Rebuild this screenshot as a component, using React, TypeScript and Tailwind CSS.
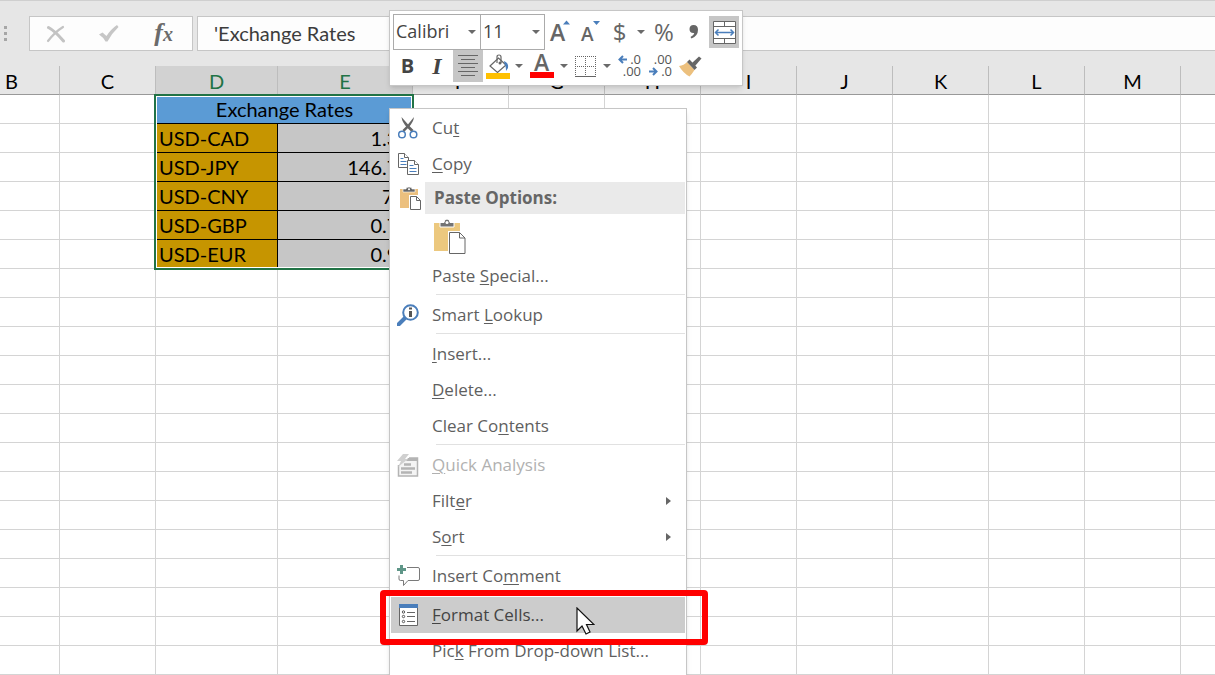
import { Fragment, type ReactNode } from 'react';
import clsx from 'clsx';

const COLUMNS = ['B', 'C', 'D', 'E', 'F', 'G', 'H', 'I', 'J', 'K', 'L', 'M', 'N'];

const RATES = [
  { pair: 'USD-CAD', rate: '1.35' },
  { pair: 'USD-JPY', rate: '146.77' },
  { pair: 'USD-CNY', rate: '7.1' },
  { pair: 'USD-GBP', rate: '0.74' },
  { pair: 'USD-EUR', rate: '0.92' },
];

const EMPTY_ROWS = 15;

const sheetFont = "font-['Lato',sans-serif]";
const uiFont = "font-['Open_Sans',sans-serif]";
const cellClass = 'h-[29px] border-r border-b border-[#d4d4d4] p-0';

function FormulaBar() {
  return (
    <div className="flex items-stretch gap-1 border-t border-[#cfcfcf] py-[15px]">
      <div className="flex w-6 items-center justify-start pl-1">
        <svg width="3" height="16" viewBox="0 0 3 16" fill="#a6a6a6">
          <path d="M0 0h3v3H0zM0 6h3v3H0zM0 12h3v3H0z" />
        </svg>
      </div>
      <div className="ml-px flex h-[35px] w-[164px] items-center justify-around border border-[#c6c6c6] bg-[#fdfdfd]">
        <button type="button" aria-label="Cancel">
          <svg width="20" height="18" viewBox="0 0 20 18" fill="none" stroke="#c3c3c3" strokeLinecap="round">
            <path d="M2.500 2.500Q9 6 17.500 16" strokeWidth="3" />
            <path d="M17 2Q9 7 2 16" strokeWidth="2.200" />
          </svg>
        </button>
        <button type="button" aria-label="Enter">
          <svg width="20" height="17" viewBox="0 0 20 17" fill="#c6c6c6">
            <path d="M0 9.500L3.500 7.500L7.500 11Q12 4 18 0L19.500 2Q13 8 8.500 16.500H6.500Q4 12 0 9.500z" />
          </svg>
        </button>
        <button
          type="button"
          className="w-6 font-['Liberation_Serif',serif] text-[26px] leading-7 font-bold text-[#6b6b6b] italic"
        >
          f<span className="text-xl">x</span>
        </button>
      </div>
      <input
        aria-label="Formula"
        defaultValue="'Exchange Rates"
        className={clsx(
          sheetFont,
          'h-[35px] min-w-0 flex-1 border border-r-0 border-[#c6c6c6] bg-[#fdfdfd] px-4 pb-0.5 text-xl text-[#3c3c3c] outline-none',
        )}
      />
    </div>
  );
}

function Sheet() {
  return (
    <table className={clsx(sheetFont, '-ml-9 w-[1313px] table-fixed border-separate border-spacing-0 text-xl leading-5 text-black')}>
      <colgroup>
        {COLUMNS.map((name) => (
          <col key={name} className={name === 'D' ? 'w-[122px]' : name === 'E' ? 'w-[135px]' : 'w-24'} />
        ))}
      </colgroup>
      <thead>
        <tr>
          {COLUMNS.map((name) => (
            <th
              key={name}
              className={clsx(
                'h-[29px] border-r border-b border-r-[#bdbdbd] border-b-[#999] p-0 pt-0.5 text-center font-normal',
                name === 'D' || name === 'E' ? 'bg-[#d2d2d2] text-[#217346]' : 'bg-[#e6e6e6]',
              )}
            >
              {name}
            </th>
          ))}
        </tr>
      </thead>
      <tbody>
        <tr>
          <td className={cellClass} />
          <td className={cellClass} />
          <td colSpan={2} className="relative h-[29px] border-b border-black bg-[#5b9bd5] p-0 text-center">
            Exchange Rates
            <div className="pointer-events-none absolute -top-px -left-0.5 h-44 w-[260px] border-2 border-[#217346] shadow-[inset_0_0_0_1px_#fff]" />
          </td>
          {COLUMNS.slice(4).map((name) => (
            <td key={name} className={cellClass} />
          ))}
        </tr>
        {RATES.map(({ pair, rate }) => (
          <tr key={pair}>
            <td className={cellClass} />
            <td className={cellClass} />
            <td className="h-[29px] border-r border-b border-black bg-[#c69500] p-0 pl-[3px]">{pair}</td>
            <td className="h-[29px] border-b border-black bg-[#c6c6c6] p-0 pr-[3px] text-right">{rate}</td>
            {COLUMNS.slice(4).map((name) => (
              <td key={name} className={cellClass} />
            ))}
          </tr>
        ))}
        {Array.from({ length: EMPTY_ROWS }, (_, row) => (
          <tr key={row}>
            {COLUMNS.map((name) => (
              <td key={name} className={cellClass} />
            ))}
          </tr>
        ))}
      </tbody>
    </table>
  );
}

function Caret() {
  return (
    <svg width="8" height="4" viewBox="0 0 8 4" fill="#6a6a6a">
      <path d="M0 0h8L4 4z" />
    </svg>
  );
}

function ToolButton({ label, className, children }: { label: string; className: string; children: ReactNode }) {
  return (
    <button type="button" aria-label={label} className={clsx('flex h-8 items-center justify-center', className)}>
      {children}
    </button>
  );
}

function ToolSelect({ label, value, className }: { label: string; value: string; className: string }) {
  return (
    <div className={clsx('relative h-9', className)}>
      <select
        aria-label={label}
        defaultValue={value}
        className="h-full w-full appearance-none border border-[#ababab] bg-white pb-0.5 pl-0.5 text-lg text-[#444] outline-none"
      >
        <option>{value}</option>
      </select>
      <span className="pointer-events-none absolute inset-y-0 right-[5px] flex items-center">
        <Caret />
      </span>
    </div>
  );
}

function MiniToolbar() {
  return (
    <div
      className={clsx(
        uiFont,
        'absolute top-[10px] left-[389px] flex h-[76px] w-[354px] flex-col border border-[#c6c6c6] bg-white pt-[3px] pl-[3px] text-[#666] shadow-md',
      )}
    >
      <div className="flex h-9 items-center">
        <ToolSelect label="Font" value="Calibri" className="w-[88px]" />
        <ToolSelect label="Font size" value="11" className="-ml-px w-[65px]" />
        <ToolButton label="Increase font size" className="w-[30px]">
          <svg className="overflow-visible" width="20" height="24" viewBox="0 0 20 24">
            <path d="M13 4.500L16.500 .5L20 4.500z" fill="#4a7ebb" />
            <text x="0" y="21" fontSize="23" fontWeight="600" fill="#666">A</text>
          </svg>
        </ToolButton>
        <ToolButton label="Decrease font size" className="w-[30px]">
          <svg className="overflow-visible" width="20" height="24" viewBox="0 0 20 24">
            <path d="M13 1h7l-3.500 4z" fill="#4a7ebb" />
            <text x="1" y="21" fontSize="19" fontWeight="600" fill="#666">A</text>
          </svg>
        </ToolButton>
        <ToolButton label="Accounting format" className="w-[29px] text-2xl">
          $
        </ToolButton>
        <ToolButton label="Accounting options" className="w-[14px]">
          <Caret />
        </ToolButton>
        <ToolButton label="Percent style" className="w-8 text-2xl">
          %
        </ToolButton>
        <ToolButton label="Comma style" className="w-7">
          <svg width="10" height="14" viewBox="0 0 10 14" fill="#666">
            <path d="M4.500 0Q9 0 9 4.800Q9 11 2.500 13.500L1.500 12Q5 10.500 5.300 8Q0.500 8.500 0.500 4Q0.700 0 4.500 0z" />
          </svg>
        </ToolButton>
        <ToolButton label="Merge and center" className="ml-px w-[30px] bg-[#c6c6c6]">
          <svg width="23" height="23" viewBox="0 0 23 23" fill="none">
            <path d="M0.500 0.500h22v22h-22zM0.500 5.500h22M0.500 17.500h22M11.500 0.500v5M11.500 17.500v5" fill="#fff" stroke="#666" />
            <path d="M2 11.500h19M5.500 8.500L2.500 11.500L5.500 14.500M17.500 8.500L20.500 11.500L17.500 14.500" stroke="#4a7ebb" strokeWidth="1.500" />
          </svg>
        </ToolButton>
      </div>
      <div className="flex h-8 items-center">
        <ToolButton label="Bold" className="w-[29px] text-xl font-bold text-[#444]">
          B
        </ToolButton>
        <ToolButton
          label="Italic"
          className="mr-px w-[30px] font-['Liberation_Serif',serif] text-2xl font-bold text-[#444] italic"
        >
          I
        </ToolButton>
        <ToolButton label="Center" className="w-[30px] bg-[#c6c6c6]">
          <svg width="20" height="22" viewBox="0 0 20 22" stroke="#666">
            <path d="M0 .5h20M3 4.500h14M0 8.500h20M3 12.500h14M0 16.500h20M3 20.500h14" />
          </svg>
        </ToolButton>
        <ToolButton label="Fill color" className="w-[29px]">
          <svg width="24" height="25" viewBox="0 0 24 25" fill="none">
            <path d="M4 12L12.500 4L20 11L11.500 18.500z" fill="#fff" stroke="#666" strokeWidth="1.200" />
            <path d="M11 9V3Q11 1 13 1t2 2v6" stroke="#666" strokeWidth="1.200" />
            <circle cx="14" cy="9" r="1.500" fill="#666" />
            <path d="M18 7Q23 9 22 14L20 17Q20 12 18.500 10z" fill="#4a7ebb" />
            <path d="M0 19h24v6H0z" fill="#ffc000" />
          </svg>
        </ToolButton>
        <ToolButton label="Fill color options" className="w-[14px]">
          <Caret />
        </ToolButton>
        <ToolButton label="Font color" className="w-[31px]">
          <svg className="overflow-visible" width="24" height="24" viewBox="0 0 24 24">
            <text x="4" y="17" fontSize="23" fontWeight="600" fill="#666">A</text>
            <path d="M0 18h24v6H0z" fill="#f00" />
          </svg>
        </ToolButton>
        <ToolButton label="Font color options" className="w-[13px]">
          <Caret />
        </ToolButton>
        <ToolButton label="Borders" className="w-[30px]">
          <svg width="21" height="21" viewBox="0 0 21 21" fill="none" stroke="#666">
            <path d="M0 .5h21M0 10.500h21M.5 0v20M10.500 0v20M20.500 0v20" strokeDasharray="1 1" />
            <path d="M0 20.500h21" />
          </svg>
        </ToolButton>
        <ToolButton label="Border options" className="w-[14px]">
          <Caret />
        </ToolButton>
        <ToolButton label="Increase decimal" className="w-[31px]">
          <svg className="overflow-visible" width="23" height="24" viewBox="0 0 23 24">
            <path d="M9 5.500H2M5 2L1.500 5.500L5 9" fill="none" stroke="#4a7ebb" strokeWidth="2" />
            <text x="23" y="10" fontSize="13" textAnchor="end" fill="#555">.0</text>
            <text x="23" y="22" fontSize="13" textAnchor="end" fill="#555">.00</text>
          </svg>
        </ToolButton>
        <ToolButton label="Decrease decimal" className="w-[31px]">
          <svg className="overflow-visible" width="23" height="24" viewBox="0 0 23 24">
            <text x="23" y="10" fontSize="13" textAnchor="end" fill="#555">.00</text>
            <path d="M0 17.500h7M4 14L7.500 17.500L4 21" fill="none" stroke="#4a7ebb" strokeWidth="2" />
            <text x="23" y="22" fontSize="13" textAnchor="end" fill="#555">.0</text>
          </svg>
        </ToolButton>
        <ToolButton label="Format painter" className="w-7">
          <svg width="23" height="21" viewBox="0 0 23 21">
            <path d="M0 10Q5 9.500 8 6L15.500 14Q13 18 10.500 20.500Q4 17 0 10z" fill="#ecc07e" />
            <path d="M8 6L10.500 3.500L18 11.500L15.500 14z" fill="#666" />
            <path d="M13 7L20 0.500L22.500 2.500L16 10z" fill="#666" />
          </svg>
        </ToolButton>
      </div>
    </div>
  );
}

const icons = {
  cut: (
    <svg width="20" height="22" viewBox="0 0 20 22" fill="none">
      <path d="M3.500 0Q4 5 9 10.500L13.500 15L15.500 13L10.500 8z" fill="#666" />
      <path d="M16 0Q15.500 5 10.500 10.500L6 15L4.500 13L9.500 8z" fill="#666" />
      <circle cx="4" cy="17.500" r="3.300" stroke="#4a7ebb" strokeWidth="1.500" />
      <circle cx="15.500" cy="17.500" r="3.300" stroke="#4a7ebb" strokeWidth="1.500" />
    </svg>
  ),
  copy: (
    <svg width="21" height="22" viewBox="0 0 21 22" fill="#fff" stroke="#666">
      <path d="M.5.5h6l4 4v10H.5z" />
      <path d="M6.500.5v4h4" />
      <path d="M2.500 5.500h3M2.500 8.500h6M2.500 11.500h6" stroke="#4a7ebb" />
      <path d="M9.500 7.500h7l4 4v10h-11z" />
      <path d="M16.500 7.500v4h4" />
      <path d="M11.500 12.500h4M11.500 15.500h7M11.500 18.500h7" stroke="#4a7ebb" />
    </svg>
  ),
  paste: (
    <svg width="21" height="23" viewBox="0 0 21 23">
      <path d="M0 2h18v19H0z" fill="#ecc07e" />
      <path d="M3 5V2h3Q6 0 9 0t3 2h3v3z" fill="#666" stroke="#fff" strokeWidth=".6" />
      <circle cx="9" cy="2.200" r="1" fill="#fff" />
      <path d="M9 8h12v15H9z" fill="#fff" />
      <path d="M10.500 9.500h6l4 4v9h-10zM16.500 9.500v4h4" fill="#fff" stroke="#666" />
    </svg>
  ),
  lookup: (
    <svg width="22" height="22" viewBox="0 0 22 22" fill="none">
      <path d="M1.500 20.500L8 14" stroke="#4a7ebb" strokeWidth="4" strokeLinecap="round" />
      <circle cx="13.500" cy="8.500" r="7.300" fill="#fff" stroke="#4a7ebb" strokeWidth="2" />
      <path d="M12 3.500h3v2h-3zM12 7h3v6h-3z" fill="#555" />
    </svg>
  ),
  analysis: (
    <svg width="22" height="23" viewBox="0 0 22 23" fill="none">
      <path d="M1.500 11v11h19V4H12" fill="#f4f4f4" stroke="#b4b4b4" strokeWidth="1.500" />
      <path d="M11 4h10v3H9z" fill="#b4b4b4" />
      <path d="M7 10.500h7M4 14.500h14M4 18.500h11" stroke="#b4b4b4" strokeWidth="2.500" />
      <path d="M6 0h6L8 5h3L1 13l3-6H0z" fill="#d0d0d0" />
    </svg>
  ),
  comment: (
    <svg width="23" height="22" viewBox="0 0 23 22" fill="none">
      <path d="M10 2.500h11q1.500 0 1.500 1.500v10q0 1.500-1.500 1.500H11l-4.500 5v-5h-3q-1.500 0-1.500-1.500v-3.500" stroke="#7a7a7a" />
      <path d="M3 0h3v3h3v3H6v3H3V6H0V3h3z" fill="#5f9688" />
    </svg>
  ),
  format: (
    <svg width="19" height="22" viewBox="0 0 19 22" fill="none">
      <path d="M.5.5h18v21H.5z" fill="#fff" stroke="#666" />
      <path d="M0 0h19v4H0z" fill="#4a7ebb" />
      <path d="M8 8.500h8M8 12.500h8M8 17.500h8" stroke="#666" />
      <circle cx="4.500" cy="8" r="1.200" stroke="#555" />
      <circle cx="4.500" cy="12.500" r="1.200" stroke="#555" />
      <circle cx="4.500" cy="17.500" r="1.200" stroke="#555" />
    </svg>
  ),
};

interface MenuItemProps {
  label: string;
  accessKey: number;
  icon?: ReactNode;
  submenu?: boolean;
  disabled?: boolean;
  active?: boolean;
}

// accessKey is the index of the underlined letter in the label
function MenuItem({ label, accessKey, icon, submenu, disabled, active }: MenuItemProps) {
  return (
    <button
      type="button"
      role="menuitem"
      disabled={disabled}
      className={clsx(
        'flex h-9 w-full items-center text-left',
        active && 'bg-[#cccccc] text-[#444]',
        disabled && 'text-[#b1b1b1]',
      )}
    >
      <span className="flex w-[34px] shrink-0 justify-center">{icon}</span>
      <span className="flex-1 pl-[7px] whitespace-pre">
        {label.slice(0, accessKey)}
        <span className="underline decoration-1 underline-offset-2">{label[accessKey]}</span>
        {label.slice(accessKey + 1)}
      </span>
      {submenu && (
        <svg className="mr-[14px]" width="5" height="8" viewBox="0 0 5 8" fill="#666">
          <path d="M0 0l5 4l-5 4z" />
        </svg>
      )}
    </button>
  );
}

function Separator() {
  return <div className="ml-[45px] h-[3px] border-t border-[#e1e1e1]" />;
}

const GROUPS: MenuItemProps[][] = [
  [{ label: 'Smart Lookup', accessKey: 6, icon: icons.lookup }],
  [
    { label: 'Insert...', accessKey: 0 },
    { label: 'Delete...', accessKey: 0 },
    { label: 'Clear Contents', accessKey: 8 },
  ],
  [
    { label: 'Quick Analysis', accessKey: 0, icon: icons.analysis, disabled: true },
    { label: 'Filter', accessKey: 4, submenu: true },
    { label: 'Sort', accessKey: 1, submenu: true },
  ],
  [{ label: 'Insert Comment', accessKey: 9, icon: icons.comment }],
];

function ContextMenu() {
  return (
    <div
      role="menu"
      className={clsx(
        uiFont,
        'absolute top-[108px] left-[389px] w-[298px] border border-[#c6c6c6] bg-white px-px pt-px pb-10 text-[17px] leading-6 text-[#5f5f5f] shadow-md',
      )}
    >
      <MenuItem label="Cut" accessKey={2} icon={icons.cut} />
      <MenuItem label="Copy" accessKey={0} icon={icons.copy} />
      <div className="flex h-8 items-center">
        <span className="flex w-[34px] shrink-0 justify-center pl-1">{icons.paste}</span>
        <span className="flex h-8 flex-1 items-center bg-[#eaeaea] pl-[9px] font-bold text-[#666]">Paste Options:</span>
      </div>
      <div className="flex h-11 items-center pl-[43px]">
        <button type="button" aria-label="Paste">
          <svg width="32" height="35" viewBox="0 0 32 35">
            <path d="M0 4h26v28H0z" fill="#ecc87e" />
            <path d="M6 8V3.500h4Q10 0 13 0t3 3.500h4V8z" fill="#737373" stroke="#fff" />
            <circle cx="13" cy="3.500" r="1.500" fill="#fff" />
            <path d="M14 12h18v23H14z" fill="#fff" />
            <path d="M15.500 13.500h10l5.500 5.500v15.500H15.500zM25.500 13.500v5.500H31" fill="#fff" stroke="#666" />
          </svg>
        </button>
      </div>
      <MenuItem label="Paste Special..." accessKey={6} />
      {GROUPS.map((items) => (
        <Fragment key={items[0].label}>
          <Separator />
          {items.map((item) => (
            <MenuItem key={item.label} {...item} />
          ))}
        </Fragment>
      ))}
      <Separator />
      <div className="relative">
        <MenuItem label="Format Cells..." accessKey={0} icon={icons.format} active />
        <div className="pointer-events-none absolute -top-[7px] -right-[23px] -bottom-3 -left-[11px] rounded-sm border-[6px] border-[#f00]" />
        <svg className="pointer-events-none absolute top-2.5 left-[185px]" width="19" height="29" viewBox="0 0 19 29">
          <path d="M1 1v23l5-5l4 8l4-2l-3.500-7.500H18z" fill="#fff" stroke="#111" strokeWidth="1.200" />
        </svg>
      </div>
      <MenuItem label="Pick From Drop-down List..." accessKey={3} />
    </div>
  );
}

export default function App() {
  return (
    <main className="relative h-screen overflow-hidden bg-white">
      <div className="bg-[#e6e6e6]">
        <FormulaBar />
      </div>
      <Sheet />
      <MiniToolbar />
      <ContextMenu />
    </main>
  );
}
